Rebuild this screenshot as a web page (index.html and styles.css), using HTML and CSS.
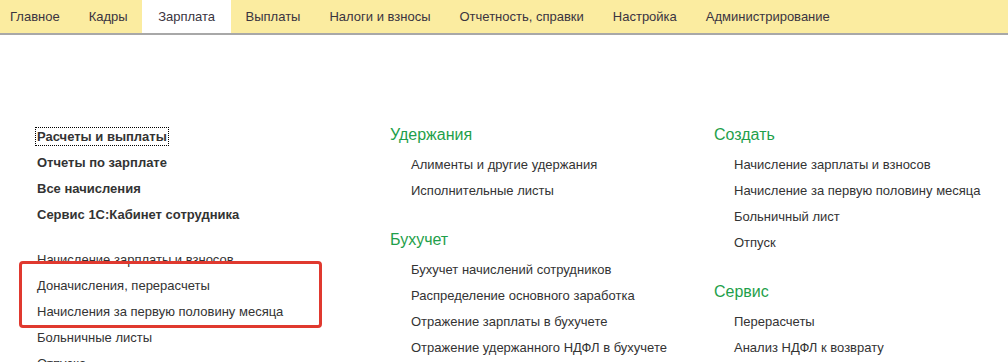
FILE: index.html
```html
<!DOCTYPE html>
<html lang="ru">
<head>
    <meta charset="UTF-8">
    <title>Зарплата</title>
    <link rel="stylesheet" href="styles.css">
</head>
<body>
    <nav class="sections">
        <a class="tab first">Главное</a>
        <a class="tab">Кадры</a>
        <a class="tab active">Зарплата</a>
        <a class="tab">Выплаты</a>
        <a class="tab">Налоги и взносы</a>
        <a class="tab">Отчетность, справки</a>
        <a class="tab">Настройка</a>
        <a class="tab">Администрирование</a>
    </nav>

    <div class="panel">
        <div class="col col-left">
            <ul class="list bold">
                <li><span class="focus">Расчеты и выплаты</span></li>
                <li>Отчеты по зарплате</li>
                <li>Все начисления</li>
                <li>Сервис 1С:Кабинет сотрудника</li>
            </ul>
            <ul class="list docs">
                <li>Начисление зарплаты и взносов</li>
                <li>Доначисления, перерасчеты</li>
                <li>Начисления за первую половину месяца</li>
                <li>Больничные листы</li>
                <li>Отпуска</li>
            </ul>
            <!-- highlight frame -->
            <div class="mark"></div>
        </div>

        <div class="col col-mid">
            <h2>Удержания</h2>
            <ul class="list sub">
                <li>Алименты и другие удержания</li>
                <li>Исполнительные листы</li>
            </ul>
            <h2>Бухучет</h2>
            <ul class="list sub">
                <li>Бухучет начислений сотрудников</li>
                <li>Распределение основного заработка</li>
                <li>Отражение зарплаты в бухучете</li>
                <li>Отражение удержанного НДФЛ в бухучете</li>
            </ul>
        </div>

        <div class="col col-right">
            <h2>Создать</h2>
            <ul class="list sub">
                <li>Начисление зарплаты и взносов</li>
                <li>Начисление за первую половину месяца</li>
                <li>Больничный лист</li>
                <li>Отпуск</li>
            </ul>
            <h2>Сервис</h2>
            <ul class="list sub">
                <li>Перерасчеты</li>
                <li>Анализ НДФЛ к возврату</li>
            </ul>
        </div>
    </div>
</body>
</html>
```

FILE: styles.css
```css
body {
    margin: 0;
    font-family: "Liberation Sans", Arial, sans-serif;
    font-size: 13px;
    color: #333;
    background: #fff;
    overflow: hidden;
}
.sections {
    display: flex;
    height: 33px;
    background-color: #fbeca0;
    border-bottom: 2px solid #a8a8a8;
}
.tab {
    line-height: 33px;
    padding: 0 14.5px;
    color: #3a3440;
    white-space: nowrap;
}
.tab.first {
    padding-left: 10px;
}
.tab.active {
    background-color: #fff;
    padding: 0 16px;
}
.panel {
    display: grid;
    grid-template-columns: 353px 324px 1fr;
    padding: 87px 0 0 37px;
}
.col {
    position: relative;
}
.col-left {
    padding-top: 2px;
}
.list {
    list-style: none;
    margin: 0;
    padding: 0;
}
.list li {
    line-height: 26px;
    white-space: nowrap;
}
.bold li {
    font-weight: bold;
}
.docs {
    margin-top: 19px;
}
.focus {
    outline: 1px dotted #000;
    outline-offset: 1px;
}
h2 {
    margin: 0 0 4px;
    font-size: 16px;
    font-weight: normal;
    line-height: 26px;
    color: #1f9f4b;
}
.sub {
    padding-left: 21px;
    margin-bottom: 23px;
}
.col-right .sub {
    padding-left: 20px;
}
.mark {
    position: absolute;
    left: -18px;
    top: 139px;
    width: 297px;
    height: 61px;
    border: 3px solid #e0392f;
    border-radius: 4px;
}
```
